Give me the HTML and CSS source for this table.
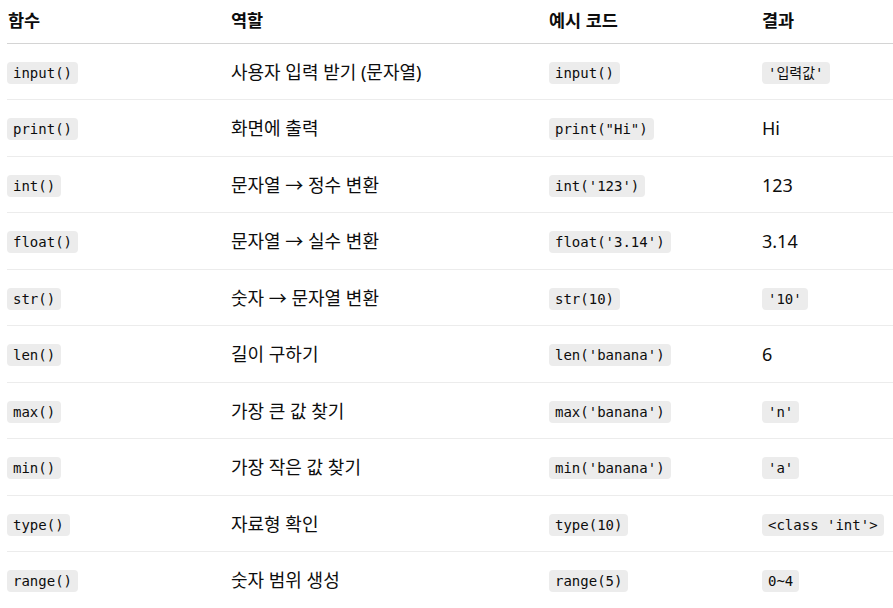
FILE: index.html
```html
<!DOCTYPE html>
<html lang="ko">
<head>
<meta charset="utf-8">
<link rel="stylesheet" href="styles.css">
</head>
<body>
<table class="fn-table">
  <colgroup>
    <col class="c1"><col class="c2"><col class="c3"><col class="c4">
  </colgroup>
  <thead>
    <tr><th>함수</th><th>역할</th><th>예시 코드</th><th>결과</th></tr>
  </thead>
  <tbody>
    <tr><td><code>input()</code></td><td>사용자 입력 받기 (문자열)</td><td><code>input()</code></td><td><code>'입력값'</code></td></tr>
    <tr><td><code>print()</code></td><td>화면에 출력</td><td><code>print("Hi")</code></td><td>Hi</td></tr>
    <tr><td><code>int()</code></td><td>문자열 → 정수 변환</td><td><code>int('123')</code></td><td>123</td></tr>
    <tr><td><code>float()</code></td><td>문자열 → 실수 변환</td><td><code>float('3.14')</code></td><td>3.14</td></tr>
    <tr><td><code>str()</code></td><td>숫자 → 문자열 변환</td><td><code>str(10)</code></td><td><code>'10'</code></td></tr>
    <tr><td><code>len()</code></td><td>길이 구하기</td><td><code>len('banana')</code></td><td>6</td></tr>
    <tr><td><code>max()</code></td><td>가장 큰 값 찾기</td><td><code>max('banana')</code></td><td><code>'n'</code></td></tr>
    <tr><td><code>min()</code></td><td>가장 작은 값 찾기</td><td><code>min('banana')</code></td><td><code>'a'</code></td></tr>
    <tr><td><code>type()</code></td><td>자료형 확인</td><td><code>type(10)</code></td><td><code>&lt;class 'int'&gt;</code></td></tr>
    <tr><td><code>range()</code></td><td>숫자 범위 생성</td><td><code>range(5)</code></td><td><code>0~4</code></td></tr>
  </tbody>
</table>
</body>
</html>
```

FILE: styles.css
```css
html, body {
  margin: 0;
  padding: 0;
  background: #ffffff;
}
body {
  font-family: "Noto Sans", "Noto Sans CJK KR", sans-serif;
  color: #0d0d0d;
  font-size: 18px;
  overflow: hidden;
}
.fn-table {
  margin-left: 7px;
  width: 886px;
  border-collapse: collapse;
  table-layout: fixed;
}
.c1 { width: 216px; }
.c2 { width: 318px; }
.c3 { width: 213px; }
.c4 { width: 139px; }
.fn-table th {
  text-align: left;
  font-weight: 700;
  font-size: 17.5px;
  line-height: 24px;
  padding: 8px 8px 11px 8px;
  border-bottom: 1px solid #d4d4d4;
  white-space: nowrap;
}
.fn-table td {
  text-align: left;
  font-size: 18px;
  line-height: 24px;
  padding: 16px 8px 15.44px 8px;
  border-bottom: 1px solid #ececec;
  white-space: nowrap;
}
.fn-table tbody tr:last-child td {
  border-bottom: none;
}
.fn-table th:first-child,
.fn-table td:first-child {
  padding-left: 0;
}
.fn-table th:first-child {
  padding-left: 1px;
}
code {
  font-family: "DejaVu Sans Mono", "Noto Sans CJK KR", monospace;
  font-size: 14px;
  line-height: 18px;
  background: #ececec;
  border-radius: 4px;
  padding: 3px 6px;
  color: #0d0d0d;
  vertical-align: 1px;
}
```
